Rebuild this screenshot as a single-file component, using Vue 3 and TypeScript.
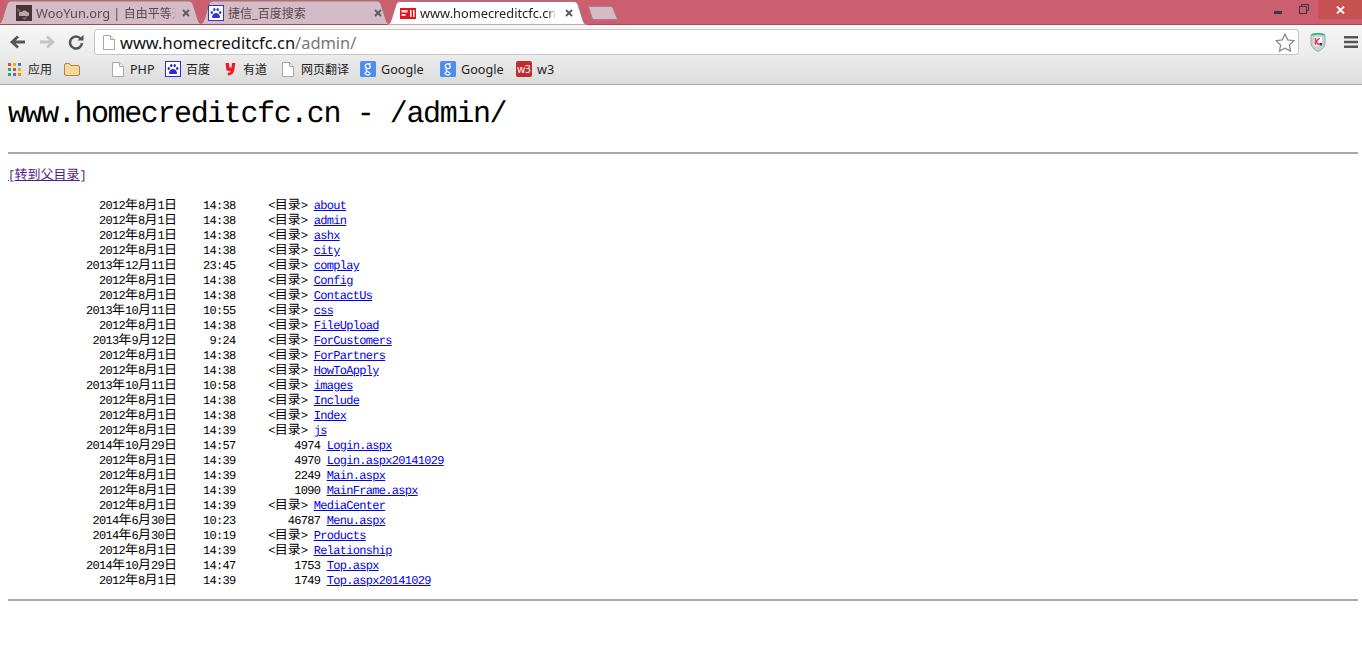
<template>
  <div class="browser">
    <div class="tabstrip">
      <div v-for="tab in tabs" :key="tab.title" class="tab" :class="[tab.cls, { active: tab.active }]">
        <svg class="tab-shape" :width="tab.width" height="24" :viewBox="`0 0 ${tab.width} 24`">
          <path :d="tabPath(tab.width)" :fill="tab.active ? '#fff' : '#d3bcc6'" stroke="#a8707e" stroke-width="1" />
        </svg>
        <svg v-if="tab.icon === 'woo'" class="fav" viewBox="0 0 16 16">
          <rect width="16" height="16" fill="#4a3338" />
          <path d="M3 10c-1-2 1-4 3-3 1-2 4-2 5 0 2 0 3 2 2 3-1 2-3 1-4 1H5c-1 0-2 0-2-1z" fill="#b9a6a6" />
          <path d="M1 3l4 3-3 1zM6 13l5-1-2 3z" fill="#82696e" />
        </svg>
        <svg v-else-if="tab.icon === 'paw'" class="fav" viewBox="0 0 16 16">
          <rect x=".5" y=".5" width="15" height="15" fill="#fff" stroke="#3535d0" />
          <path d="M8 8c2 0 4 2 4 4 0 1.500-2 1-4 1s-4 .5-4-1c0-2 2-4 4-4z" fill="#3535d0" />
          <ellipse cx="3.800" cy="7.500" rx="1.200" ry="1.600" fill="#3535d0" />
          <ellipse cx="6.300" cy="4.600" rx="1.200" ry="1.700" fill="#3535d0" />
          <ellipse cx="9.700" cy="4.600" rx="1.200" ry="1.700" fill="#3535d0" />
          <ellipse cx="12.200" cy="7.500" rx="1.200" ry="1.600" fill="#3535d0" />
        </svg>
        <svg v-else class="fav" viewBox="0 0 16 16">
          <rect y="3" width="16" height="11" fill="#e8141c" />
          <rect x="1.500" y="5" width="6" height="2.500" fill="#fff" opacity=".85" />
          <rect x="1.500" y="9" width="4" height="2" fill="#fff" opacity=".85" />
          <rect x="10" y="5" width="1.500" height="7" fill="#fff" />
          <rect x="13" y="5" width="1.500" height="7" fill="#fff" />
        </svg>
        <span class="tab-title"><span v-for="(part, i) in split(tab.title)" :key="i" :class="{ 'tab-zh': part.cjk }">{{ part.text }}</span></span>
        <svg class="tab-close" viewBox="0 0 8 8">
          <path d="M1 1l6 6M7 1L1 7" stroke="#5a5a5a" stroke-width="1.800" />
        </svg>
      </div>
      <svg class="newtab" width="32" height="16" viewBox="0 0 32 16">
        <path d="M1.500 1.500H24Q25.500 1.500 26 3L30.500 14.500H7Q5.500 14.500 5 13z" fill="#d3bcc6" stroke="#b07a88" />
      </svg>
      <div class="window-buttons">
        <svg class="win-min" width="8" height="3" viewBox="0 0 8 3"><rect width="8" height="3" fill="#3a3a3a" /></svg>
        <svg class="win-restore" width="10" height="10" viewBox="0 0 10 10">
          <path d="M2.500 2V.5h7v6H8" fill="none" stroke="#3a3a3a" />
          <rect x=".5" y="2.500" width="7" height="7" fill="none" stroke="#3a3a3a" stroke-width="1" />
        </svg>
        <div class="win-close">
          <svg width="9" height="8" viewBox="0 0 9 8"><path d="M1 .5l7 7M8 .5l-7 7" stroke="#fff" stroke-width="1.800" /></svg>
        </div>
      </div>
    </div>

    <div class="toolbar">
      <svg class="nav back" width="18" height="16" viewBox="0 0 18 16">
        <path d="M16 8H4M9 2.500L3 8l6 5.500" fill="none" stroke="#555" stroke-width="2.800" />
      </svg>
      <svg class="nav forward" width="18" height="16" viewBox="0 0 18 16">
        <path d="M2 8h12M9 2.500L15 8l-6 5.500" fill="none" stroke="#c4c4c4" stroke-width="2.800" />
      </svg>
      <svg class="nav reload" width="16" height="16" viewBox="0 0 16 16">
        <path d="M13 5.200A6 6 0 1 0 14 9" fill="none" stroke="#555" stroke-width="2.500" />
        <path d="M9.500 6.500H15.500V.8z" fill="#555" />
      </svg>
      <div class="omnibox">
        <svg class="page-icon" width="12" height="15" viewBox="0 0 12 15">
          <path d="M.5.5h7l4 4v10H.5z" fill="#fff" stroke="#a9a9a9" />
          <path d="M7.500.5v4h4" fill="#eee" stroke="#a9a9a9" />
        </svg>
        <span class="url">www.homecreditcfc.cn<span class="url-path">/admin/</span></span>
        <svg class="star" width="20" height="19" viewBox="0 0 20 19">
          <path d="M10 1.200l2.700 5.700 6.200.8-4.500 4.300 1.100 6.100L10 15.200l-5.500 2.900 1.100-6.100L1.100 7.700l6.200-.8z" fill="#fff" stroke="#8a8a8a" stroke-width="1.300" />
        </svg>
      </div>
      <svg class="shield" width="16" height="19" viewBox="0 0 16 19">
        <path d="M1 2.200Q8 -.5 15 2.200V10Q15 15 8 18.500 1 15 1 10z" fill="#c9d2d4" stroke="#9aa8aa" />
        <path d="M1.500 1.800Q8 -.4 14.500 1.800" fill="none" stroke="#2fae96" stroke-width="1.500" />
        <rect x="4" y="4" width="8" height="9" fill="#fff" />
        <path d="M5.500 5v7M9.500 5L6 8.500 9 12" fill="none" stroke="#e8394a" stroke-width="1.600" />
        <rect x="9.500" y="10" width="2.500" height="2.500" fill="#333" />
      </svg>
      <svg class="menu" width="14" height="12" viewBox="0 0 14 12">
        <path d="M0 0h14v2.400H0zM0 4.800h14v2.400H0zM0 9.600h14V12H0z" fill="#555" />
      </svg>
    </div>

    <div class="bookmarks">
      <div class="bm bm-apps">
        <span class="apps-grid">
          <i v-for="(color, i) in appColors" :key="i" :style="{ background: color }"></i>
        </span>
        <span class="zh">应用</span>
      </div>
      <div class="bm bm-folder">
        <svg width="16" height="13" viewBox="0 0 16 13">
          <path d="M.5 2Q.5.5 2 .5h3.500l1.500 2h7Q15.500 2.500 15.500 4v7Q15.500 12.500 14 12.500H2Q.5 12.500.5 11z" fill="#f8d79a" stroke="#a9864f" />
        </svg>
      </div>
      <div class="bm bm-php">
        <svg width="12" height="15" viewBox="0 0 12 15">
          <path d="M.5.5h7l4 4v10H.5z" fill="#fff" stroke="#a9a9a9" />
          <path d="M7.500.5v4h4" fill="#eee" stroke="#a9a9a9" />
        </svg>
        <span>PHP</span>
      </div>
      <div class="bm bm-baidu">
        <svg width="16" height="16" viewBox="0 0 16 16">
          <rect x=".5" y=".5" width="15" height="15" fill="#fff" stroke="#2b2bd8" />
          <path d="M8 8c2 0 4 2 4 4 0 1.500-2 1-4 1s-4 .5-4-1c0-2 2-4 4-4z" fill="#2b2bd8" />
          <ellipse cx="3.800" cy="7.500" rx="1.200" ry="1.600" fill="#2b2bd8" />
          <ellipse cx="6.300" cy="4.600" rx="1.200" ry="1.700" fill="#2b2bd8" />
          <ellipse cx="9.700" cy="4.600" rx="1.200" ry="1.700" fill="#2b2bd8" />
          <ellipse cx="12.200" cy="7.500" rx="1.200" ry="1.600" fill="#2b2bd8" />
        </svg>
        <span class="zh">百度</span>
      </div>
      <div class="bm bm-youdao">
        <svg width="11" height="14" viewBox="0 0 11 14">
          <path d="M.5 1h3.500l.5 4.500h2L7 1h3.500L9 9Q8.300 13 3 13.500L2.500 11Q5 10.800 5.500 9H3Q1.500 9 1.200 7z" fill="#e8202e" />
        </svg>
        <span class="zh">有道</span>
      </div>
      <div class="bm bm-fanyi">
        <svg width="12" height="15" viewBox="0 0 12 15">
          <path d="M.5.5h7l4 4v10H.5z" fill="#fff" stroke="#a9a9a9" />
          <path d="M7.500.5v4h4" fill="#eee" stroke="#a9a9a9" />
        </svg>
        <span class="zh">网页翻译</span>
      </div>
      <div class="bm bm-google">
        <svg width="16" height="16" viewBox="0 0 16 16">
          <rect width="16" height="16" rx="1.500" fill="#4f8ef0" />
          <path d="M10.800 2.800H7.500Q5.200 3 5.300 5.300 5.500 7.600 8 7.600 10.300 7.400 10.200 5.200 10 3.400 8.200 3M6.800 8Q5.400 9.300 7 10.200L9.500 11.600Q10.800 13.200 8.400 13.800 5 14 5 12.300 5.300 11 7 10.800" fill="none" stroke="#fff" stroke-width="1.200" />
        </svg>
        <span>Google</span>
      </div>
      <div class="bm bm-google2">
        <svg width="16" height="16" viewBox="0 0 16 16">
          <rect width="16" height="16" rx="1.500" fill="#4f8ef0" />
          <path d="M10.800 2.800H7.500Q5.200 3 5.300 5.300 5.500 7.600 8 7.600 10.300 7.400 10.200 5.200 10 3.400 8.200 3M6.800 8Q5.400 9.300 7 10.200L9.500 11.600Q10.800 13.200 8.400 13.800 5 14 5 12.300 5.300 11 7 10.800" fill="none" stroke="#fff" stroke-width="1.200" />
        </svg>
        <span>Google</span>
      </div>
      <div class="bm bm-w3">
        <span class="w3-icon">w3</span>
        <span>w3</span>
      </div>
    </div>

    <main class="page">
      <h1 class="heading">www.homecreditcfc.cn - /admin/</h1>
      <hr class="rule" />
      <p class="parent">
        <a class="visited" href="#"><span v-for="(part, i) in split('[转到父目录]')" :key="i" class="linked" :class="part.cjk ? 'cjk' : 'lat'">{{ part.text }}</span></a>
      </p>
      <div class="listing">
        <div v-for="row in rows" :key="row.name" class="row">
          <span v-for="(part, i) in split(row.prefix)" :key="i" :class="part.cjk ? 'cjk' : 'lat'">{{ part.text }}</span><a href="#" class="lat">{{ row.name }}</a>
        </div>
      </div>
      <hr class="rule bottom" />
    </main>
  </div>
</template>

<script setup lang="ts">
interface Tab {
  title: string;
  width: number;
  cls: string;
  icon: string;
  active?: boolean;
}

const tabs: Tab[] = [
  { title: "WooYun.org | 自由平等开", width: 206, cls: "tab-a", icon: "woo" },
  { title: "捷信_百度搜索", width: 192, cls: "tab-b", icon: "paw" },
  { title: "www.homecreditcfc.cn -", width: 202, cls: "tab-c", icon: "page", active: true },
];

function tabPath(w: number): string {
  const h = 24;
  return `M0.5 ${h}Q4 ${h} 5 ${h - 4}L10 4Q11 1 14 1H${w - 14}Q${w - 11} 1 ${w - 10} 4L${w - 5} ${h - 4}Q${w - 4} ${h} ${w - 0.5} ${h}`;
}

const appColors = [
  "#e2483d", "#f0b400", "#3b78e7",
  "#3aa757", "#e2483d", "#f0b400",
  "#3aa757", "#3b78e7", "#f09300",
];

// [date, time, size or empty for a folder, name]
const data: [string, string, string, string][] = [
  ["2012年8月1日", "14:38", "", "about"],
  ["2012年8月1日", "14:38", "", "admin"],
  ["2012年8月1日", "14:38", "", "ashx"],
  ["2012年8月1日", "14:38", "", "city"],
  ["2013年12月11日", "23:45", "", "complay"],
  ["2012年8月1日", "14:38", "", "Config"],
  ["2012年8月1日", "14:38", "", "ContactUs"],
  ["2013年10月11日", "10:55", "", "css"],
  ["2012年8月1日", "14:38", "", "FileUpload"],
  ["2013年9月12日", "9:24", "", "ForCustomers"],
  ["2012年8月1日", "14:38", "", "ForPartners"],
  ["2012年8月1日", "14:38", "", "HowToApply"],
  ["2013年10月11日", "10:58", "", "images"],
  ["2012年8月1日", "14:38", "", "Include"],
  ["2012年8月1日", "14:38", "", "Index"],
  ["2012年8月1日", "14:39", "", "js"],
  ["2014年10月29日", "14:57", "4974", "Login.aspx"],
  ["2012年8月1日", "14:39", "4970", "Login.aspx20141029"],
  ["2012年8月1日", "14:39", "2249", "Main.aspx"],
  ["2012年8月1日", "14:39", "1090", "MainFrame.aspx"],
  ["2012年8月1日", "14:39", "", "MediaCenter"],
  ["2014年6月30日", "10:23", "46787", "Menu.aspx"],
  ["2014年6月30日", "10:19", "", "Products"],
  ["2012年8月1日", "14:39", "", "Relationship"],
  ["2014年10月29日", "14:47", "1753", "Top.aspx"],
  ["2012年8月1日", "14:39", "1749", "Top.aspx20141029"],
];

// a CJK character takes two cells of the text grid, a latin one takes one
function cells(s: string): number {
  let n = 0;
  for (const ch of s) n += ch.charCodeAt(0) > 255 ? 2 : 1;
  return n;
}

function padTo(s: string, width: number): string {
  return " ".repeat(Math.max(0, width - cells(s))) + s;
}

const rows = data.map(([date, time, size, name]) => {
  const third = size ? padTo(size, 13) : padTo("<目录>", 11);
  return { name, prefix: padTo(date, 26) + padTo(time, 9) + third + " " };
});

function split(s: string): { text: string; cjk: boolean }[] {
  const parts: { text: string; cjk: boolean }[] = [];
  for (const ch of s) {
    const cjk = ch.charCodeAt(0) > 255;
    const last = parts[parts.length - 1];
    if (last && last.cjk === cjk) last.text += ch;
    else parts.push({ text: ch, cjk });
  }
  return parts;
}
</script>

<style scoped>
.browser {
  width: 1362px;
  height: 670px;
  overflow: hidden;
  display: flex;
  flex-direction: column;
  background: #fff;
  color: #000;
}

.tabstrip {
  flex: none;
  height: 25px;
  box-sizing: border-box;
  display: flex;
  background: #cc5f6f;
  border-bottom: 1px solid #a34a58;
}

.tab {
  position: relative;
  flex: none;
  height: 24px;
  display: flex;
  align-items: center;
  box-sizing: border-box;
  font: 12.8px "Noto Sans", "Noto Sans CJK SC", sans-serif;
  color: #5b4a50;
}

.tab-zh { font-size: 12px; }

.tab-a { width: 206px; margin-left: -3px; padding: 1px 13px 0 19px; }
.tab-b { width: 192px; margin-left: -4px; padding: 1px 9px 0 9px; }
.tab-c { width: 202px; margin-left: -5px; padding: 1px 15px 0 14px; color: #222; z-index: 1; }

.tab-shape {
  position: absolute;
  left: 0;
  top: 0;
}

.active .tab-shape {
  height: 25px;
}

.fav {
  position: relative;
  flex: none;
  width: 16px;
  height: 16px;
  margin-right: 4px;
}

.tab-title {
  position: relative;
  flex: 1;
  min-width: 0;
  white-space: nowrap;
}

.tab-a .tab-title,
.tab-c .tab-title {
  -webkit-mask-image: linear-gradient(to left, transparent 0, #000 8px);
  mask-image: linear-gradient(to left, transparent 0, #000 8px);
}

.tab-close {
  position: relative;
  flex: none;
  width: 8px;
  height: 8px;
  margin-left: 9px;
}

.tab-a .tab-close {
  margin-left: 6px;
}

.newtab {
  flex: none;
  margin: 5px 0 0 -1px;
}

.window-buttons {
  margin-left: auto;
  display: flex;
  align-items: flex-start;
}

.win-min { margin-top: 11px; margin-right: 17px; }
.win-restore { margin-top: 4px; margin-right: 9px; }

.win-close {
  width: 44px;
  height: 19px;
  background: #c75050;
  display: flex;
  align-items: center;
  justify-content: center;
}

.toolbar {
  flex: none;
  height: 30px;
  display: flex;
  align-items: center;
  box-sizing: border-box;
  padding: 4px 0 0 9px;
  background: linear-gradient(#f6f6f6, #ececec);
}

.nav { flex: none; }
.forward { margin-left: 11px; }
.reload { margin-left: 12px; }

.omnibox {
  flex: none;
  width: 1205px;
  height: 26px;
  margin-left: 10px;
  box-sizing: border-box;
  display: flex;
  align-items: center;
  padding: 0 3px 0 8px;
  background: #fff;
  border: 1px solid #c6c6c6;
  border-radius: 3px;
}

.url {
  margin-left: 5px;
  font: 16.45px "Noto Sans", sans-serif;
  color: #111;
  white-space: nowrap;
}

.url-path { color: #777; }

.star { margin-left: auto; }
.shield { margin-left: 11px; }
.menu { margin-left: 18px; }

.bookmarks {
  flex: none;
  height: 30px;
  box-sizing: border-box;
  display: flex;
  align-items: center;
  padding: 0 0 1px 8px;
  background: linear-gradient(#ececec, #dcdcdc);
  border-bottom: 1px solid #a8a8a8;
  font: 12.6px "Noto Sans", "Noto Sans CJK SC", sans-serif;
  color: #222;
}

.zh { font-size: 12px; }

.bm {
  flex: none;
  display: flex;
  align-items: center;
  gap: 5px;
}

.bm-apps { width: 56px; gap: 7px; }
.bm-folder { width: 48px; }
.bm-php { width: 53px; gap: 6px; }
.bm-baidu { width: 60px; }
.bm-youdao { width: 57px; gap: 7px; }
.bm-fanyi { width: 78px; gap: 7px; }
.bm-google { width: 80px; }
.bm-google2 { width: 76px; }

.apps-grid {
  width: 13px;
  height: 13px;
  display: grid;
  grid-template-columns: repeat(3, 3px);
  grid-auto-rows: 3px;
  gap: 2px;
}

.apps-grid i { display: block; }

.w3-icon {
  width: 16px;
  height: 16px;
  border-radius: 2px;
  background: #be2c2f;
  color: #fff;
  font-size: 10px;
  line-height: 16px;
  text-align: center;
}

.page {
  flex: 1;
  min-height: 0;
  padding: 0 4px 0 8px;
  font-family: "Liberation Mono", monospace;
  text-rendering: geometricPrecision;
}

.heading {
  margin: 0;
  height: 51px;
  padding-top: 14px;
  box-sizing: border-box;
  font-size: 30px;
  font-weight: 400;
  letter-spacing: -1.4px;
  line-height: 32px;
  white-space: pre;
}

.rule {
  margin: 16px 0 0;
  border: 0;
  height: 2px;
  background: #a9a9a9;
}

.parent {
  margin: 12px 0 0;
  height: 15px;
  line-height: 15px;
  white-space: pre;
}

.listing {
  margin-top: 15px;
}

.row {
  height: 15px;
  line-height: 15px;
  white-space: pre;
}

.lat,
.cjk {
  display: inline-block;
  height: 15px;
  line-height: 15px;
}

.lat {
  font-size: 12px;
  letter-spacing: -0.7px;
}

.cjk {
  font-family: "Noto Sans CJK SC", sans-serif;
  font-size: 13px;
  font-weight: 400;
}

.linked {
  text-decoration: underline;
}

a {
  color: #0000ee;
  text-decoration: underline;
}

a.visited {
  color: #551a8b;
}

.bottom {
  margin-top: 13px;
}
</style>

<style>
html,
body {
  background: #fff;
  overflow: hidden;
}
</style>
